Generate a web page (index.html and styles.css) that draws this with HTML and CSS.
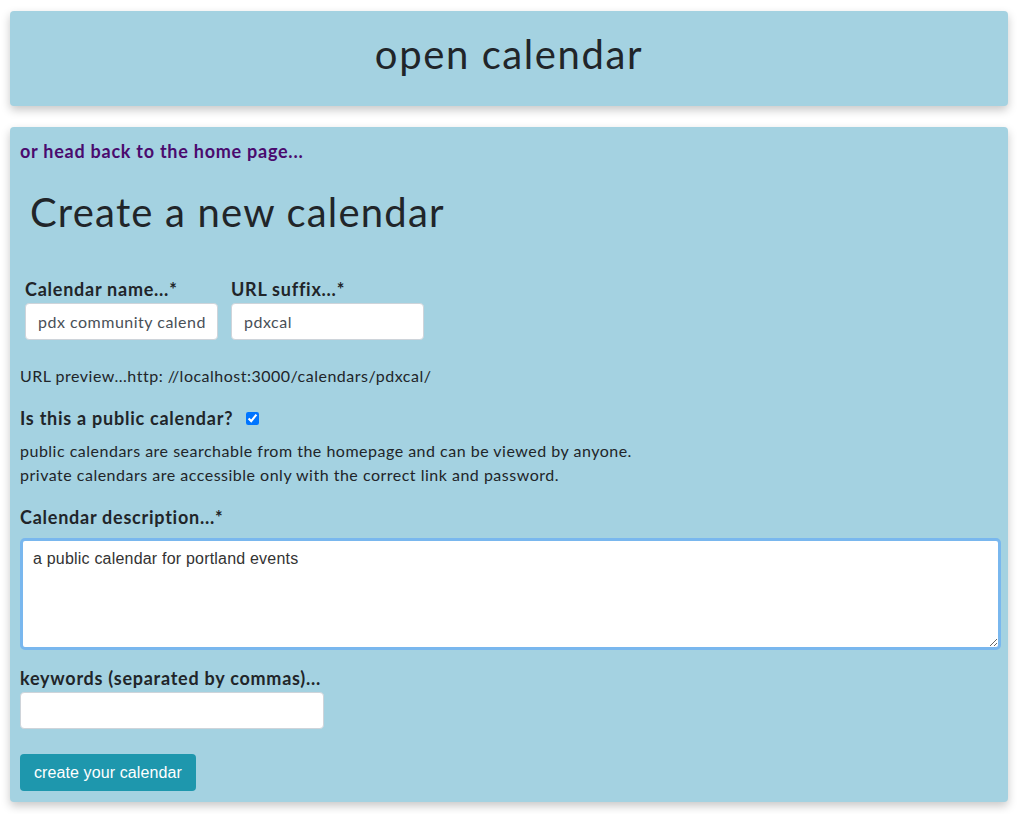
FILE: index.html
```html
<!DOCTYPE html>
<html>
<head>
<meta charset="utf-8">
<link rel="stylesheet" href="styles.css">
</head>
<body>
<header class="banner"><h1 class="site-title">open calendar</h1></header>
<main class="panel">
  <a class="back-link" href="#">or head back to the home page...</a>
  <h2 class="page-title">Create a new calendar</h2>
  <form class="form">
    <div class="row">
      <div class="field">
        <label class="label">Calendar name...*</label>
        <input class="input input-sm" type="text" value="pdx community calendar">
      </div>
      <div class="field">
        <label class="label">URL suffix...*</label>
        <input class="input input-sm" type="text" value="pdxcal">
      </div>
    </div>
    <p class="preview">URL preview...http: //localhost:3000/calendars/pdxcal/</p>
    <div class="check-row">
      <label class="label">Is this a public calendar?</label>
      <input class="checkbox" type="checkbox" checked>
    </div>
    <p class="note">public calendars are searchable from the homepage and can be viewed by anyone.<br>private calendars are accessible only with the correct link and password.</p>
    <label class="label block">Calendar description...*</label>
    <textarea class="textarea">a public calendar for portland events</textarea>
    <label class="label block kw">keywords (separated by commas)...</label>
    <input class="input input-kw" type="text">
    <div><button class="btn" type="button">create your calendar</button></div>
  </form>
</main>
</body>
</html>
```
FILE: styles.css
```css
html, body { margin: 0; padding: 0; background: #fff; }
body {
  padding: 11px 10px 12px 10px;
  font-family: Lato, "Open Sans", sans-serif;
  color: #212529;
}
.banner {
  box-sizing: border-box;
  background: #a4d2e1;
  border-radius: 4px;
  box-shadow: 0 4px 10px rgba(0,0,0,0.22);
  height: 95px;
  padding-bottom: 9px;
  display: flex;
  align-items: center;
  justify-content: center;
}
.site-title {
  margin: 0;
  font-weight: 400;
  font-size: 40px;
  letter-spacing: 1.6px;
  color: #212529;
}
.panel {
  margin-top: 21px;
  background: #a4d2e1;
  border-radius: 4px;
  box-shadow: 0 4px 10px rgba(0,0,0,0.22);
  padding: 12px 10px 11px 10px;
  display: block;
}
.back-link {
  display: block;
  color: #4a0b6e;
  font-weight: 700;
  font-size: 18px;
  letter-spacing: 0.75px;
  text-decoration: none;
  line-height: 24px;
}
.page-title {
  margin: 25px 0 0 10px;
  font-weight: 400;
  font-size: 40px;
  letter-spacing: 1.2px;
  line-height: 48px;
}
.form { margin-top: 41px; }
.row { display: flex; gap: 13px; padding-left: 5px; }
.field { display: flex; flex-direction: column; }
.label {
  font-weight: 700;
  font-size: 18px;
  letter-spacing: 0.75px;
  line-height: 24px;
  color: #212529;
}
.block { display: block; }
.input {
  box-sizing: border-box;
  border: 1px solid #ced4da;
  border-radius: 4px;
  background: #fff;
  font-family: inherit;
  font-size: 16px;
  letter-spacing: 0.5px;
  color: #495057;
  padding: 6px 12px;
  height: 37px;
  outline: none;
}
.input-sm { width: 193px; margin-top: 2px; }
.preview {
  margin: 24px 0 0 0;
  font-size: 16px;
  letter-spacing: 0.5px;
  line-height: 24px;
}
.check-row {
  margin-top: 18px;
  display: flex;
  align-items: center;
  gap: 13px;
}
.checkbox { margin: 0; width: 13px; height: 13px; }
.note {
  margin: 9px 0 0 0;
  font-size: 16px;
  letter-spacing: 0.5px;
  line-height: 24px;
}
.note + .label { margin-top: 18px; }
.textarea {
  display: block;
  box-sizing: border-box;
  width: 981px;
  height: 112px;
  margin-top: 9px;
  border: 3px solid #79b7ee;
  border-radius: 5px;
  padding: 9px 10px 7px 10px;
  font-family: "Liberation Sans", Roboto, sans-serif;
  font-size: 16px;
  letter-spacing: 0.2px;
  color: #333;
  outline: none;
  resize: vertical;
}
.kw { margin-top: 16px; }
.input-kw { width: 304px; margin-top: 2px; display: block; }
.btn {
  margin-top: 25px;
  background: #1e97ad;
  color: #fff;
  border: 0;
  border-radius: 4px;
  height: 37px;
  padding: 1px 14px 0 14px;
  font-family: "Liberation Sans", Roboto, sans-serif;
  font-size: 16px;
  letter-spacing: 0.1px;
  cursor: pointer;
}
```
